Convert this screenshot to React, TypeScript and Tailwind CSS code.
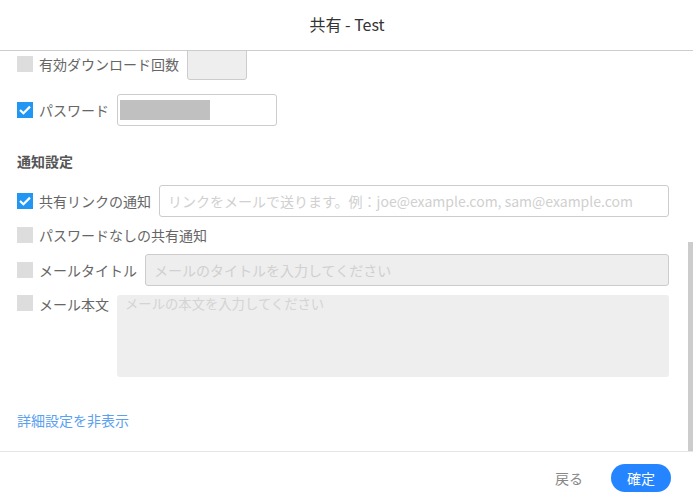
export default function App() {
  const font = { fontFamily: '"Noto Sans CJK JP", "Noto Sans", sans-serif' };
  const Check = ({ on }: { on?: boolean }) => (
    <span className={`w-4 h-4 shrink-0 flex items-center justify-center ${on ? "bg-[#2196f3]" : "bg-[#dddddd]"}`}>
      {on && (
        <svg width="16" height="16" viewBox="0 0 16 16" fill="none">
          <path d="M3 8 L6.4 11.2 L13 4.6" stroke="#fff" strokeWidth="2.2" />
        </svg>
      )}
    </span>
  );
  const label = "text-sm leading-[20px] text-[#666666] whitespace-nowrap ml-[6px]";
  return (
    <div style={font} className="w-[693px] h-[503px] bg-white flex flex-col overflow-hidden">
      <header className="h-[51px] shrink-0 border-b border-[#cccccc] flex items-center justify-center text-base text-[#333333] pb-[2px] pl-[1px]">
        共有 - Test
      </header>
      <main className="h-[400px] shrink-0 relative overflow-hidden">
        <div className="flex flex-col px-[17px] -mt-[3px]">
          <div className="flex items-center h-8">
            <Check />
            <span className={label}>有効ダウンロード回数</span>
            <div className="ml-2 w-[60px] h-8 rounded-[3px] border border-[#cccccc] bg-[#eeeeee]" />
          </div>
          <div className="flex items-center h-8 mt-[14px]">
            <Check on />
            <span className={label}>パスワード</span>
            <div className="ml-2 w-[160px] h-8 rounded-[3px] border border-[#cccccc] bg-white flex items-center pl-[2px]">
              <div className="w-[90px] h-5 bg-[#c0c0c0]" />
            </div>
          </div>
          <h2 className="mt-[25px] text-sm leading-5 font-bold text-[#555555]">通知設定</h2>
          <div className="flex items-center h-8 mt-[14px]">
            <Check on />
            <span className={label}>共有リンクの通知</span>
            <div className="ml-2 w-[510px] h-8 rounded-[3px] border border-[#cccccc] bg-white flex items-center px-[8px] text-sm text-[#d0d0d0] whitespace-nowrap">
              リンクをメールで送ります。例：joe@example.com, sam@example.com
            </div>
          </div>
          <div className="flex items-center h-4 mt-[10px]">
            <Check />
            <span className={label}>パスワードなしの共有通知</span>
          </div>
          <div className="flex items-center h-8 mt-[11px]">
            <Check />
            <span className={label}>メールタイトル</span>
            <div className="ml-2 w-[524px] h-8 rounded-[3px] border border-[#cccccc] bg-[#eeeeee] flex items-center px-[8px] text-sm text-[#d0d0d0] whitespace-nowrap">
              メールのタイトルを入力してください
            </div>
          </div>
          <div className="flex items-start mt-[9px]">
            <Check />
            <span className={`${label} -mt-[1px]`}>メール本文</span>
            <div className="ml-2 w-[552px] h-[82px] rounded-[3px] bg-[#eeeeee] px-[8px] text-[13.33px] leading-4 pt-[1px] text-[#d4d4d4] whitespace-nowrap">
              メールの本文を入力してください
            </div>
          </div>
          <a className="mt-[33px] text-sm leading-5 text-[#5a9ff0]">詳細設定を非表示</a>
        </div>
        <div className="absolute right-0 top-[191px] bottom-0 w-[5px] bg-[#cccccc]" />
      </main>
      <footer className="flex-1 border-t border-[#e5e5e5] flex items-center justify-end pr-[22px]">
        <span className="text-sm text-[#888888] mr-[28px]">戻る</span>
        <button className="w-[60px] h-[28px] rounded-full bg-[#2584ff] text-white text-sm flex items-center justify-center">確定</button>
      </footer>
    </div>
  );
}
